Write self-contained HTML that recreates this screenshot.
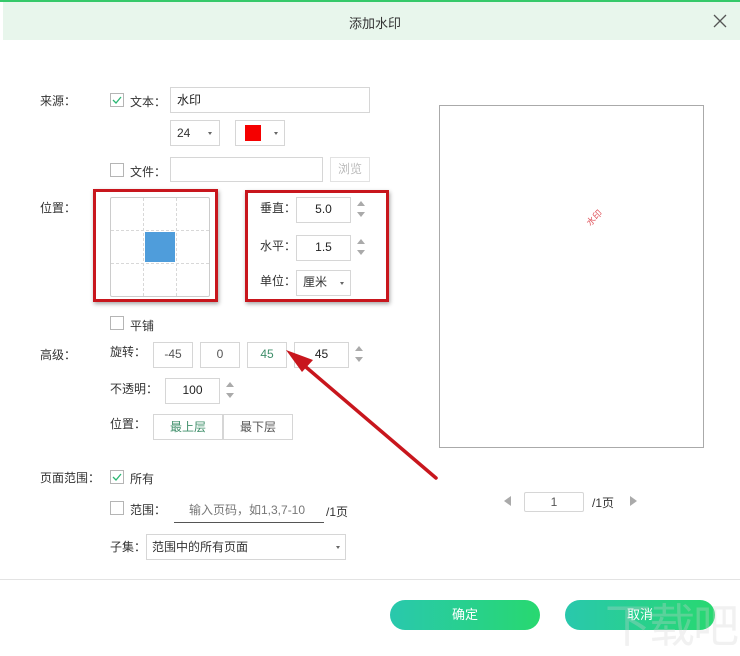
<!DOCTYPE html>
<html><head><meta charset="utf-8"><style>
*{margin:0;padding:0;box-sizing:border-box}
body{width:740px;height:650px;background:#fff;position:relative;overflow:hidden;font-family:"Liberation Sans","Noto Sans CJK SC",sans-serif;font-size:12px;color:#333}
.a{position:absolute}
.box{position:absolute;border:1px solid #d6d6d6;background:#fff;text-align:center;line-height:23px;font-size:12px}
.cb{position:absolute;width:14px;height:14px;border:1px solid #b5b5b5;background:#fff}
.lb{position:absolute;font-size:12px;color:#333;white-space:nowrap}
.dd{position:absolute;width:0;height:0;border-left:2.5px solid transparent;border-right:2.5px solid transparent;border-top:3px solid #666}
.sp{position:absolute;width:8px;height:18px}
.sp:before{content:"";position:absolute;left:0;top:0;border-left:4px solid transparent;border-right:4px solid transparent;border-bottom:5px solid #aaa}
.sp:after{content:"";position:absolute;left:0;top:11px;border-left:4px solid transparent;border-right:4px solid transparent;border-top:5px solid #aaa}
.rb{position:absolute;border:3px solid #c8161d;box-shadow:1px 2px 4px rgba(0,0,0,.35)}
.btn{position:absolute;height:30px;border-radius:15px;background:linear-gradient(90deg,#29c8ad,#28d870);color:#fff;text-align:center;line-height:30px;font-size:13px}
</style></head><body>
<div class="a" style="left:0;top:0;width:740px;height:2px;background:#35c96a"></div>
<div class="a" style="left:3px;top:2px;width:737px;height:38px;background:#e8f6ec"></div>
<div class="lb" style="left:349px;top:13px;font-size:13px">添加水印</div>
<svg class="a" style="left:713px;top:14px" width="14" height="14"><path d="M1 1L13 13M13 1L1 13" stroke="#555" stroke-width="1.3"/></svg>

<div class="lb" style="left:40px;top:92px">来源：</div>
<div class="cb" style="left:110px;top:93px"></div>
<svg class="a" style="left:112px;top:96px" width="10" height="8"><path d="M1 4L4 7L9 1" stroke="#2bb673" stroke-width="1.3" fill="none"/></svg>
<div class="lb" style="left:130px;top:93px">文本：</div>
<div class="box" style="left:170px;top:87px;width:200px;height:26px;text-align:left;padding-left:6px;line-height:24px;color:#222">水印</div>
<div class="box" style="left:170px;top:120px;width:50px;height:26px;text-align:left;padding-left:6px;line-height:24px">24</div>
<div class="dd" style="left:208px;top:132px"></div>
<div class="box" style="left:235px;top:120px;width:50px;height:26px"></div>
<div class="a" style="left:245px;top:125px;width:16px;height:16px;background:#f50000"></div>
<div class="dd" style="left:274px;top:132px"></div>
<div class="cb" style="left:110px;top:163px"></div>
<div class="lb" style="left:130px;top:163px">文件：</div>
<div class="box" style="left:170px;top:157px;width:153px;height:25px"></div>
<div class="box" style="left:330px;top:157px;width:40px;height:25px;color:#bbb;border-color:#e2e2e2">浏览</div>

<div class="lb" style="left:40px;top:199px">位置：</div>
<div class="rb" style="left:93px;top:189px;width:125px;height:113px"></div>
<div class="a" style="left:110px;top:197px;width:100px;height:100px;border:1px solid #ccc;border-radius:2px;background:#fff"></div>
<svg class="a" style="left:110px;top:197px" width="100" height="100"><path d="M33.5 1V99M66.5 1V99M1 33.5H99M1 66.5H99" stroke="#d8d8d8" stroke-dasharray="3,2"/></svg>
<div class="a" style="left:145px;top:232px;width:30px;height:30px;background:#4f9ddb"></div>
<div class="rb" style="left:245px;top:190px;width:144px;height:112px"></div>
<div class="lb" style="left:260px;top:199px">垂直：</div>
<div class="box" style="left:296px;top:197px;width:55px;height:26px;color:#222">5.0</div>
<div class="sp" style="left:357px;top:201px"></div>
<div class="lb" style="left:260px;top:237px">水平：</div>
<div class="box" style="left:296px;top:235px;width:55px;height:26px;color:#222">1.5</div>
<div class="sp" style="left:357px;top:239px"></div>
<div class="lb" style="left:260px;top:272px">单位：</div>
<div class="box" style="left:296px;top:270px;width:55px;height:26px;text-align:left;padding-left:6px">厘米</div>
<div class="dd" style="left:340px;top:282px"></div>

<div class="cb" style="left:110px;top:316px"></div>
<div class="lb" style="left:130px;top:317px">平铺</div>
<div class="lb" style="left:40px;top:346px">高级：</div>
<div class="lb" style="left:110px;top:343px">旋转：</div>
<div class="box" style="left:153px;top:342px;width:40px;height:26px;color:#555">-45</div>
<div class="box" style="left:200px;top:342px;width:40px;height:26px;color:#555">0</div>
<div class="box" style="left:247px;top:342px;width:40px;height:26px;color:#3f8f6a">45</div>
<div class="box" style="left:294px;top:342px;width:55px;height:26px;color:#222">45</div>
<div class="sp" style="left:355px;top:346px"></div>
<div class="lb" style="left:110px;top:380px">不透明：</div>
<div class="box" style="left:165px;top:378px;width:55px;height:26px;color:#222">100</div>
<div class="sp" style="left:226px;top:382px"></div>
<div class="lb" style="left:110px;top:415px">位置：</div>
<div class="box" style="left:153px;top:414px;width:70px;height:26px;color:#3f8f6a;line-height:24px">最上层</div>
<div class="box" style="left:223px;top:414px;width:70px;height:26px;color:#555;line-height:24px">最下层</div>

<div class="lb" style="left:40px;top:469px">页面范围：</div>
<div class="cb" style="left:110px;top:470px"></div>
<svg class="a" style="left:112px;top:473px" width="10" height="8"><path d="M1 4L4 7L9 1" stroke="#2bb673" stroke-width="1.3" fill="none"/></svg>
<div class="lb" style="left:130px;top:470px">所有</div>
<div class="cb" style="left:110px;top:501px"></div>
<div class="lb" style="left:130px;top:501px">范围：</div>
<div class="lb" style="left:189px;top:501px;color:#777">输入页码，如1,3,7-10</div>
<div class="a" style="left:174px;top:522px;width:150px;height:1px;background:#555"></div>
<div class="lb" style="left:326px;top:503px">/1页</div>
<div class="lb" style="left:110px;top:538px">子集：</div>
<div class="box" style="left:146px;top:534px;width:200px;height:26px;text-align:left;padding-left:5px;line-height:24px">范围中的所有页面</div>
<div class="dd" style="left:336px;top:546px"></div>

<div class="a" style="left:439px;top:105px;width:265px;height:343px;border:1px solid #aaa"></div>
<div class="lb" style="left:585px;top:211px;color:#e0525a;font-size:9px;transform:rotate(-45deg)">水印</div>
<div class="a" style="left:504px;top:496px;border-top:5px solid transparent;border-bottom:5px solid transparent;border-right:7px solid #aaa"></div>
<div class="box" style="left:524px;top:492px;width:60px;height:20px;line-height:18px;border-radius:2px;color:#555">1</div>
<div class="lb" style="left:592px;top:494px">/1页</div>
<div class="a" style="left:630px;top:496px;border-top:5px solid transparent;border-bottom:5px solid transparent;border-left:7px solid #aaa"></div>

<div class="a" style="left:0;top:579px;width:740px;height:1px;background:#e3e3e3"></div>
<div class="btn" style="left:390px;top:600px;width:150px">确定</div>
<div class="btn" style="left:565px;top:600px;width:150px">取消</div>
<div class="lb" style="left:605px;top:590px;font-size:46px;color:rgba(210,210,210,.3);letter-spacing:-2px">下载吧</div>

<svg class="a" style="left:0;top:0" width="740" height="650"><path d="M436 478L300 362" stroke="#c8161d" stroke-width="3.5" stroke-linecap="round"/><path d="M286 350L313 360L302 372Z" fill="#c8161d"/></svg>
</body></html>
